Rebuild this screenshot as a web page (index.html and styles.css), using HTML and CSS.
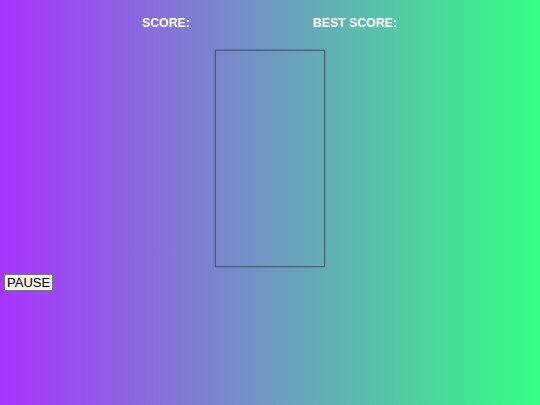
FILE: index.html
```html
<!DOCTYPE html>
<html>
<head>
<meta charset="utf-8">
<link rel="stylesheet" href="styles.css">
</head>
<body>
<div class="page">
  <div class="scores">
    <div class="score">SCORE:</div>
    <div class="score">BEST SCORE:</div>
  </div>
  <div class="board-wrap">
    <div class="board"></div>
  </div>
  <div class="controls">
    <button class="pause">PAUSE</button>
  </div>
</div>
</body>
</html>
```
FILE: styles.css
```css
html, body {
  margin: 0;
  padding: 0;
}
body {
  width: 540px;
  height: 405px;
  background: linear-gradient(to right, #a834ff, #34ff84);
  font-family: "Liberation Sans", Arial, sans-serif;
  overflow: hidden;
}
.page {
  display: flex;
  flex-direction: column;
}
.scores {
  display: flex;
  padding: 15px 0 0 142px;
  gap: 123px;
  height: 20px;
}
.score {
  color: #ffffff;
  font-weight: bold;
  font-size: 12.3px;
  line-height: 17px;
}
.board-wrap {
  display: flex;
  justify-content: center;
  padding-top: 15px;
}
.board {
  width: 108px;
  height: 215px;
  border: 1px solid rgba(50, 60, 90, 0.65);
  box-shadow: 0 0 2px rgba(0, 0, 0, 0.35);
}
.controls {
  display: flex;
  padding: 7px 0 0 4px;
}
.pause {
  margin: 0;
  padding: 0 2px;
  height: 17px;
  font-family: "Liberation Sans", Arial, sans-serif;
  font-size: 13px;
  line-height: 15px;
  color: #000;
  background: #f0f0f0;
  border: 1px solid #767676;
  border-radius: 0;
}
```
